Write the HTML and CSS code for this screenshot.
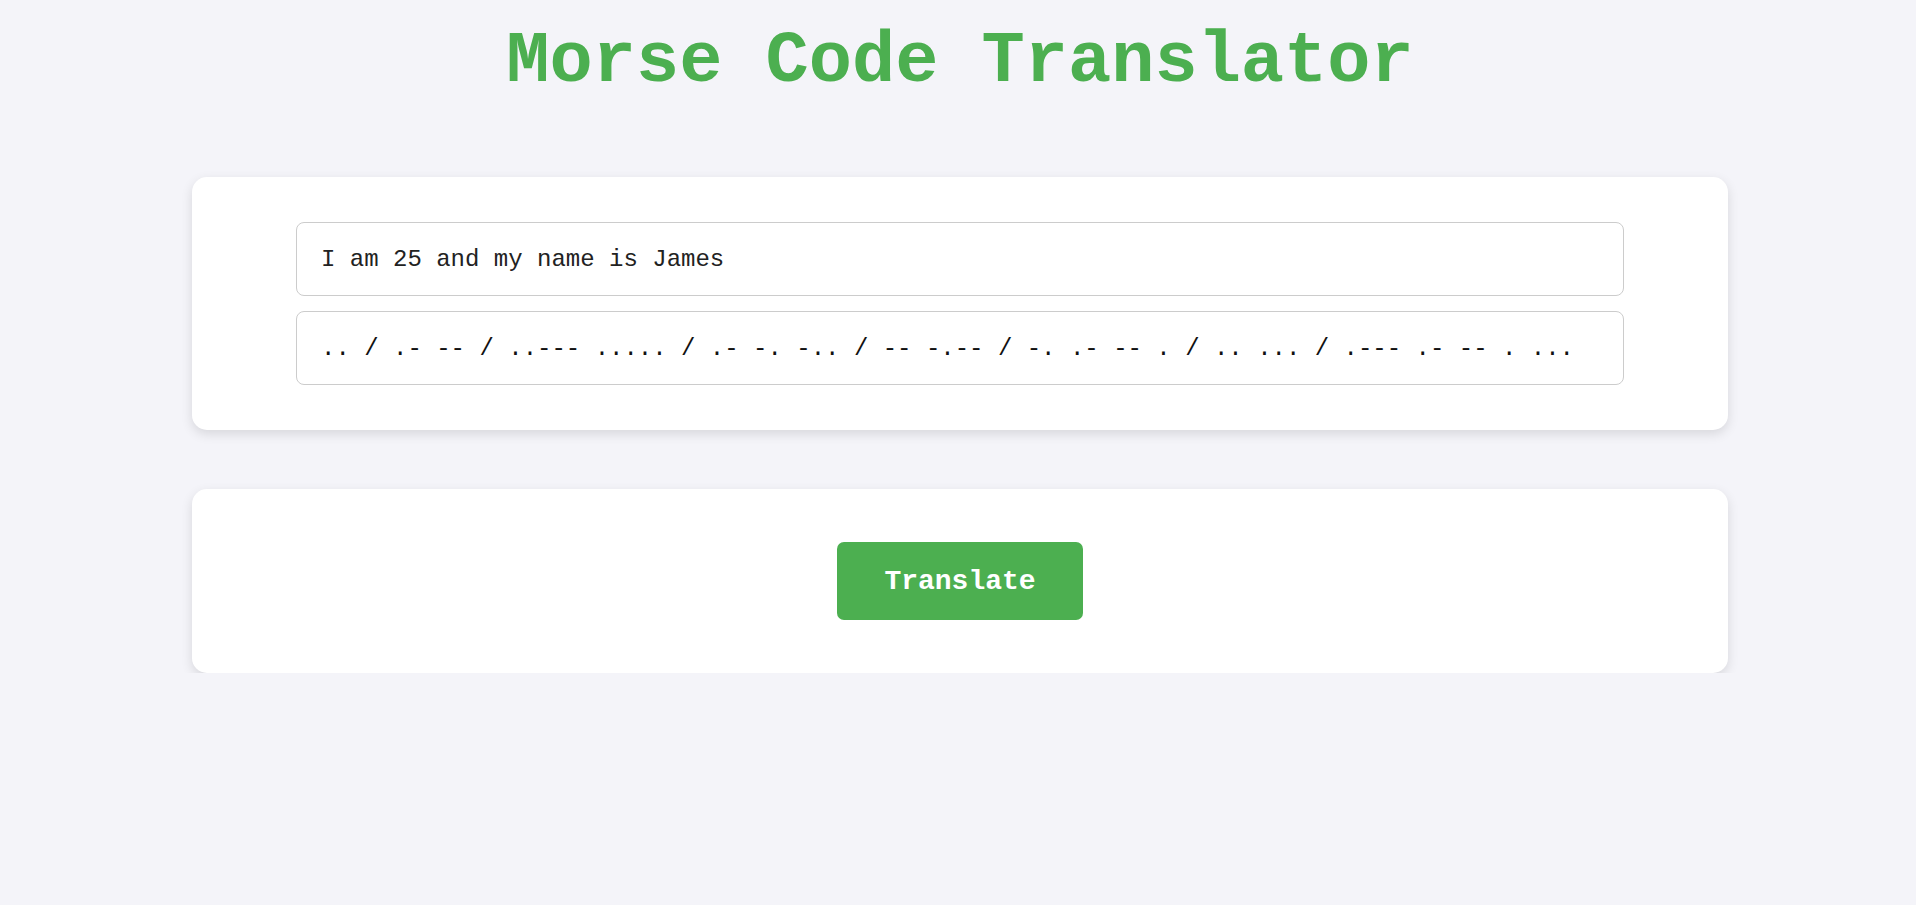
FILE: index.html
```html
<!DOCTYPE html>
<html lang="en">
<head>
<meta charset="utf-8">
<title>Morse Code Translator</title>
<link rel="stylesheet" href="styles.css">
</head>
<body>
<div class="page">
  <h1 class="title">Morse Code Translator</h1>
  <section class="card card-io">
    <input class="field field-text" type="text" value="I am 25 and my name is James">
    <input class="field field-morse" type="text" value=".. / .- -- / ..--- ..... / .- -. -.. / -- -.-- / -. .- -- . / .. ... / .--- .- -- . ...">
  </section>
  <section class="card card-actions">
    <button class="btn" type="button">Translate</button>
  </section>
</div>
</body>
</html>
```

FILE: styles.css
```css
html, body {
  margin: 0;
  padding: 0;
  background: #f4f4f9;
}

body {
  font-family: "Liberation Mono", "Courier New", monospace;
  color: #222;
}

.page {
  padding: 0 188px 0 192px;
}

.title {
  margin: 21px 0 74px;
  font-size: 72px;
  line-height: 82px;
  font-weight: bold;
  color: #4caf50;
  text-align: center;
}

.card {
  background: #ffffff;
  border-radius: 15px;
  box-shadow: 0 4px 12px rgba(0, 0, 0, 0.12);
  box-sizing: border-box;
}

.card-io {
  display: flex;
  flex-direction: column;
  gap: 15px;
  padding: 45px 104px;
  margin-bottom: 59px;
}

.field {
  box-sizing: border-box;
  height: 74px;
  width: 100%;
  margin: 0;
  padding: 0 24px;
  border: 1px solid #cccccc;
  border-radius: 8px;
  background: #ffffff;
  font-family: "Liberation Mono", "Courier New", monospace;
  font-size: 24px;
  color: #222;
  outline: none;
}

.field-morse {
  color: #111;
}

.card-actions {
  display: flex;
  justify-content: center;
  padding: 53px 0;
}

.btn {
  box-sizing: border-box;
  height: 78px;
  width: 246px;
  padding: 0;
  border: none;
  border-radius: 7px;
  background: #4caf50;
  color: #ffffff;
  font-family: "Liberation Mono", "Courier New", monospace;
  font-size: 28px;
  font-weight: bold;
  cursor: pointer;
}
```
